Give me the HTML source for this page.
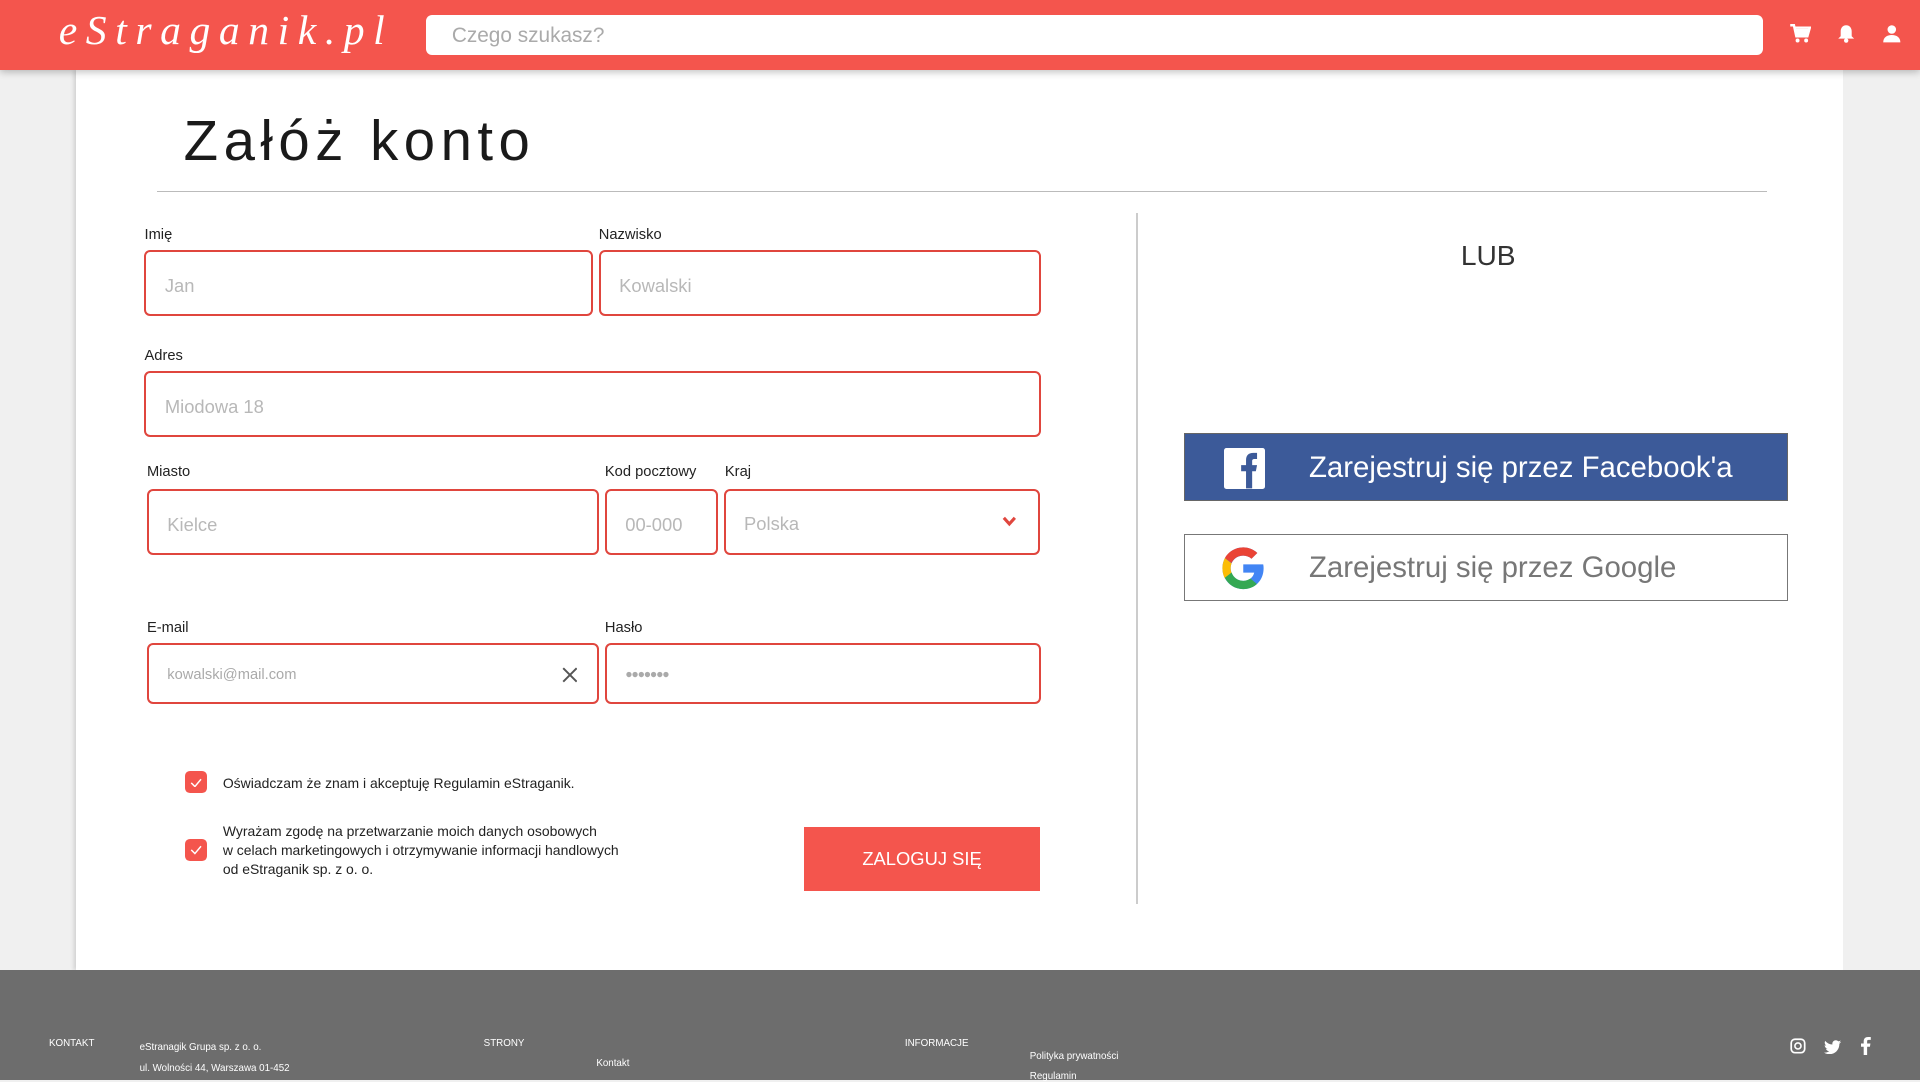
<!DOCTYPE html>
<html><head><meta charset="utf-8"><style>
html,body{margin:0;padding:0}
body{width:1568px;height:882px;overflow:hidden;background:#f0f0f0;zoom:1.2244898;font-family:"Liberation Sans",sans-serif;position:relative}
.a{position:absolute}
.hdr{left:0;top:0;width:1568px;height:57px;background:#f4554d;box-shadow:0 2px 6px rgba(0,0,0,.25);z-index:2}
.logo{left:48px;top:6px;color:#fff;font-family:"Liberation Serif",serif;font-style:italic;font-size:34px;letter-spacing:7px}
.search{left:348px;top:12px;width:1092px;height:33px;background:#fff;border-radius:5px}
.search span{position:absolute;left:21px;top:8px;font-size:17px;color:#aaa}
.card{left:62px;top:57px;width:1443px;height:735px;background:#fff;box-shadow:-2px 0 3px rgba(0,0,0,.12)}
.title{left:150px;top:88px;font-size:46px;color:#1a1a1a;letter-spacing:4.5px}
.hr{left:128px;top:156px;width:1315px;height:1px;background:#bbb}
.vr{left:928px;top:174px;width:1px;height:564px;background:#ccc}
.lbl{font-size:12px;color:#222}
.in{border:2px solid #e0463e;border-radius:5px;box-sizing:border-box;background:#fff}
.in span{position:absolute;left:15px;font-size:15px;color:#b8b8b8}
.ft{left:0;top:792px;width:1568px;height:90px;background:#6d6d6d}
.f{position:absolute;color:#fff;font-size:8px}
.cb{width:18px;height:18px;background:#f4554d;border-radius:4px}
.txt{font-size:11.4px;color:#222;line-height:15.5px}
</style></head><body>
<div class="a hdr">
<div class="a logo">eStraganik.pl</div>
<div class="a search"><span>Czego szukasz?</span></div>
<svg class="a" style="left:1461px;top:20px" width="18" height="16" viewBox="0 0 18 16"><path d="M1 1h3l2 9h9l2-7H5" fill="none" stroke="#fff" stroke-width="2"/><rect x="5" y="4" width="11" height="5" fill="#fff"/><circle cx="7" cy="13.5" r="1.6" fill="#fff"/><circle cx="14" cy="13.5" r="1.6" fill="#fff"/></svg>
<svg class="a" style="left:1500px;top:20px" width="15" height="16" viewBox="0 0 15 16"><path d="M7.5 1C4.5 1 3 3.5 3 6v4l-2 2h13l-2-2V6c0-2.5-1.5-5-4.5-5z" fill="#fff"/><circle cx="7.5" cy="13.5" r="1.8" fill="#fff"/></svg>
<svg class="a" style="left:1537px;top:20px" width="16" height="16" viewBox="0 0 16 16"><circle cx="8" cy="4.5" r="3.5" fill="#fff"/><path d="M1 15c0-4 3-6 7-6s7 2 7 6z" fill="#fff"/></svg>
</div>
<div class="a card"></div>
<div class="a title">Załóż konto</div>
<div class="a hr"></div>
<div class="a vr"></div>

<div class="a lbl" style="left:118px;top:185px">Imię</div>
<div class="a in" style="left:118px;top:204px;width:366px;height:54px"><span style="top:19px">Jan</span></div>
<div class="a lbl" style="left:489px;top:185px">Nazwisko</div>
<div class="a in" style="left:489px;top:204px;width:361px;height:54px"><span style="top:19px">Kowalski</span></div>
<div class="a lbl" style="left:118px;top:284px">Adres</div>
<div class="a in" style="left:118px;top:303px;width:732px;height:54px"><span style="top:19px">Miodowa 18</span></div>
<div class="a lbl" style="left:120px;top:379px">Miasto</div>
<div class="a in" style="left:120px;top:399px;width:369px;height:54px"><span style="top:19px">Kielce</span></div>
<div class="a lbl" style="left:494px;top:379px">Kod pocztowy</div>
<div class="a in" style="left:494px;top:399px;width:92px;height:54px"><span style="top:19px">00-000</span></div>
<div class="a lbl" style="left:592px;top:379px">Kraj</div>
<div class="a in" style="left:591px;top:399px;width:258px;height:54px"><span style="top:18px">Polska</span>
<svg class="a" style="left:226px;top:21px" width="12" height="9" viewBox="0 0 12 9"><path d="M1.5 1.5l4.5 5 4.5-5" fill="none" stroke="#e0463e" stroke-width="2.5"/></svg></div>
<div class="a lbl" style="left:120px;top:506px">E-mail</div>
<div class="a in" style="left:120px;top:525px;width:369px;height:50px"><span style="top:18px;font-size:12px;color:#aaa">kowalski@mail.com</span>
<svg class="a" style="left:337px;top:18px" width="13" height="13" viewBox="0 0 13 13"><path d="M1 1l11 11M12 1L1 12" stroke="#555" stroke-width="1.6"/></svg></div>
<div class="a lbl" style="left:494px;top:506px">Hasło</div>
<div class="a in" style="left:494px;top:525px;width:356px;height:50px"><span style="top:18px;font-size:10px;color:#aaa;letter-spacing:-1px">●●●●●●●</span></div>

<div class="a cb" style="left:151px;top:630px"></div>
<svg class="a" style="left:155px;top:635px" width="10" height="8" viewBox="0 0 10 8"><path d="M1 4l3 3 5-6" fill="none" stroke="#fff" stroke-width="1.2"/></svg>
<div class="a txt" style="left:182px;top:632px">Oświadczam że znam i akceptuję Regulamin eStraganik.</div>
<div class="a cb" style="left:151px;top:685px"></div>
<svg class="a" style="left:155px;top:690px" width="10" height="8" viewBox="0 0 10 8"><path d="M1 4l3 3 5-6" fill="none" stroke="#fff" stroke-width="1.2"/></svg>
<div class="a txt" style="left:182px;top:671px">Wyrażam zgodę na przetwarzanie moich danych osobowych<br>w celach marketingowych i otrzymywanie informacji handlowych<br>od eStraganik sp. z o. o.</div>
<div class="a" style="left:657px;top:675px;width:192px;height:53px;background:#f4554d;color:#fff;font-size:15px;text-align:center;line-height:53px">ZALOGUJ SIĘ</div>

<div class="a" style="left:1193px;top:196px;font-size:23px;color:#333">LUB</div>
<div class="a" style="left:967px;top:354px;width:493px;height:55px;background:#3c5a99;box-sizing:border-box;border:1px solid #666"></div>
<div class="a" style="left:1000px;top:366px;width:33px;height:33px;background:#fff;border-radius:2px;overflow:hidden">
<svg width="33" height="33" viewBox="0 0 33 33"><path d="M18 33V19h-4v-5h4v-4c0-4 2-6 6-6h3v5h-2c-2 0-2 1-2 2v3h4l-1 5h-3v14z" fill="#3c5a99"/></svg></div>
<div class="a" style="left:1069px;top:368px;font-size:24px;color:#fff">Zarejestruj się przez Facebook'a</div>
<div class="a" style="left:967px;top:436px;width:493px;height:55px;background:#fff;box-sizing:border-box;border:1px solid #777"></div>
<svg class="a" style="left:996px;top:445px" width="38" height="38" viewBox="0 0 48 48"><path d="M43.6 20H24v8.5h11.3C34.2 33.6 29.7 37 24 37c-7.2 0-13-5.8-13-13s5.8-13 13-13c3.3 0 6.2 1.2 8.5 3.2l6-6C34.6 4.6 29.6 2.5 24 2.5 12.1 2.5 2.5 12.1 2.5 24S12.1 45.5 24 45.5c11 0 21-8 21-21.5 0-1.4-.1-2.7-.4-4z" fill="#4285f4"/><path d="M5 13.5l7 5.1C13.9 14.1 18.5 11 24 11c3.3 0 6.2 1.2 8.5 3.2l6-6C34.6 4.6 29.6 2.5 24 2.5 15.7 2.5 8.6 7 5 13.5z" fill="#ea4335"/><path d="M5 13.5C3.4 16.6 2.5 20.2 2.5 24s.9 7.4 2.5 10.5l7-5.4C11.4 27.5 11 25.8 11 24s.4-3.5 1-5.1z" fill="#fbbc05"/><path d="M24 45.5c5.5 0 10.4-1.9 14.1-5.3l-6.7-5.6C29.5 36 27 37 24 37c-5.6 0-10.3-3.6-12-8.6l-7 5.4C8.5 40.9 15.7 45.5 24 45.5z" fill="#34a853"/></svg>
<div class="a" style="left:1069px;top:450px;font-size:24px;color:#777">Zarejestruj się przez Google</div>

<div class="a ft">
<div class="f" style="left:40px;top:56px">KONTAKT</div>
<div class="f" style="left:114px;top:59px">eStranagik Grupa sp. z o. o.</div>
<div class="f" style="left:114px;top:76px">ul. Wolności 44, Warszawa 01-452</div>
<div class="f" style="left:395px;top:56px">STRONY</div>
<div class="f" style="left:487px;top:72px">Kontakt</div>
<div class="f" style="left:739px;top:56px">INFORMACJE</div>
<div class="f" style="left:841px;top:66px">Polityka prywatności</div>
<div class="f" style="left:841px;top:83px">Regulamin</div>
<svg class="a" style="left:1462px;top:56px" width="13" height="13" viewBox="0 0 13 13"><rect x="1" y="1" width="11" height="11" rx="3" fill="none" stroke="#fff" stroke-width="1.4"/><circle cx="6.5" cy="6.5" r="2.5" fill="none" stroke="#fff" stroke-width="1.3"/></svg>
<svg class="a" style="left:1490px;top:57px" width="14" height="12" viewBox="0 0 24 20"><path d="M24 2.4c-.9.4-1.8.7-2.8.8 1-.6 1.8-1.6 2.2-2.700-1 .6-2 1-3.1 1.2C19.3.7 18 0 16.6 0c-2.7 0-4.9 2.2-4.9 4.900 0 .4 0 .8.1 1.100C7.7 5.800 4.100 3.900 1.700.9c-.4.700-.7 1.600-.7 2.500 0 1.700.9 3.200 2.200 4.100-.8 0-1.600-.2-2.200-.6v.1c0 2.400 1.700 4.400 3.900 4.800-.4.1-.8.2-1.300.2-.3 0-.6 0-.9-.1.6 2 2.400 3.400 4.600 3.400-1.700 1.300-3.800 2.100-6.100 2.100H0c2.200 1.400 4.800 2.200 7.500 2.200 9.100 0 14-7.500 14-14v-.6c1-.7 1.800-1.600 2.500-2.600z" fill="#fff"/></svg>
<svg class="a" style="left:1520px;top:55px" width="8" height="15" viewBox="0 0 8 15"><path d="M5 15V8h2.3l.4-2.7H5V3.6c0-.8.2-1.3 1.3-1.3H8V.1C7.7 0 6.8 0 5.8 0 3.6 0 2.2 1.3 2.2 3.7v1.6H0V8h2.2v7z" fill="#fff"/></svg>
</div>
</body></html>
